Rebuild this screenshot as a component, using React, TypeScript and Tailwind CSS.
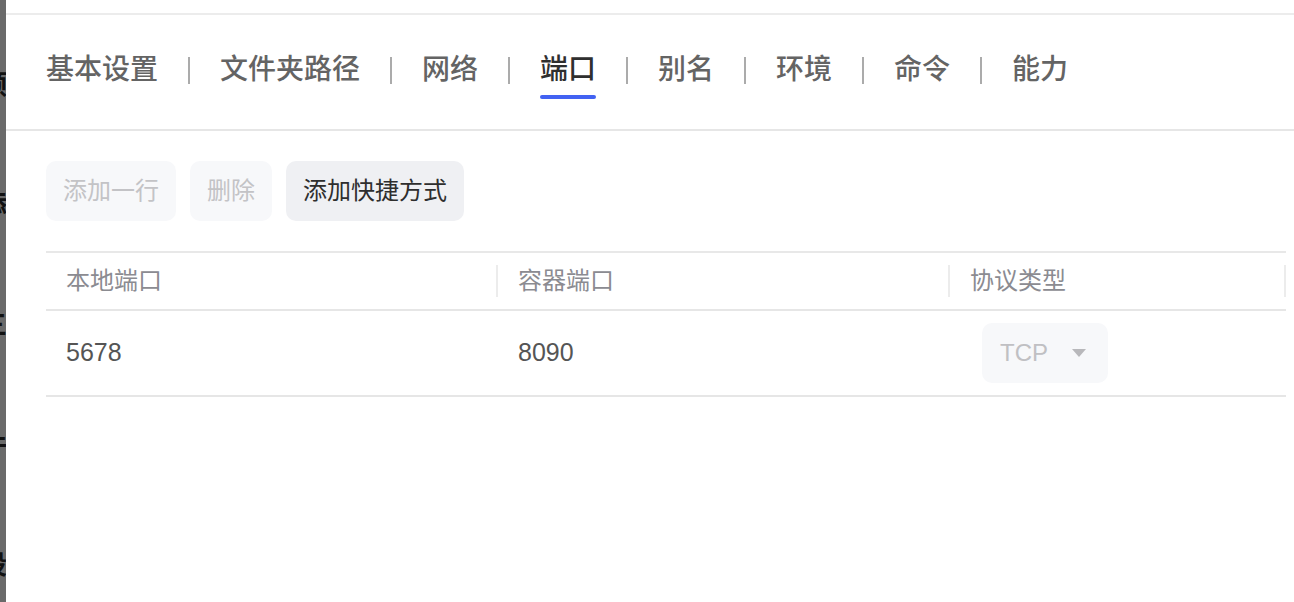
const tabs = ["基本设置", "文件夹路径", "网络", "端口", "别名", "环境", "命令", "能力"];
const activeTab = "端口";

const behind = ["预", "添", "三", "件", "设"];

const columns = [
  { title: "本地端口", width: "w-[452px]" },
  { title: "容器端口", width: "w-[452px]" },
  { title: "协议类型", width: "flex-1" },
];

const font = "font-['Liberation_Sans','Noto_Sans_CJK_SC',sans-serif]";

const App = () => {
  return (
    <div className={`flex h-[602px] w-[1294px] overflow-hidden bg-white ${font}`}>
      {/* page behind the drawer, dimmed */}
      <div className="w-[6px] shrink-0 overflow-hidden bg-[#6a6a6a]">
        <div className="ml-[-19px] flex w-[26px] flex-col pt-[25px] text-[26px] leading-[120px] font-bold text-[#111111]">
          {behind.map((c) => (
            <span key={c}>{c}</span>
          ))}
        </div>
      </div>

      <div className="flex flex-1 flex-col">
        <div className="h-[13px]" />
        <div className="h-[2px] bg-[#ececec]" />

        {/* tabs */}
        <div className="flex h-[116px] items-start border-b-2 border-[#e6e6e6] pl-[40px] pt-[36px]">
          {tabs.map((tab, i) => {
            const active = tab === activeTab;
            return (
              <div key={tab} className="flex items-start">
                {i > 0 && (
                  <div className="mx-[30px] flex h-[38px] items-center">
                    <div className="h-[27px] w-[2px] bg-[#ababab]" />
                  </div>
                )}
                <div className="flex flex-col items-center">
                  <span
                    className={`text-[28px] leading-[38px] font-medium ${
                      active ? "text-[#2f2f2f]" : "text-[#646464]"
                    }`}
                  >
                    {tab}
                  </span>
                  <div
                    className={`mt-[6px] h-[4px] w-full rounded-full ${
                      active ? "bg-[#4262f2]" : "bg-transparent"
                    }`}
                  />
                </div>
              </div>
            );
          })}
        </div>

        <div className="pl-[40px] pr-[8px] pt-[30px]">
          {/* toolbar */}
          <div className="flex gap-[14px]">
            <button className="h-[60px] rounded-[10px] bg-[#f7f8fa] px-[17px] text-[24px] text-[#c3c3c6]">
              添加一行
            </button>
            <button className="h-[60px] rounded-[10px] bg-[#f7f8fa] px-[17px] text-[24px] text-[#c3c3c6]">
              删除
            </button>
            <button className="h-[60px] rounded-[10px] bg-[#eff0f3] px-[17px] text-[24px] text-[#2e2e2e]">
              添加快捷方式
            </button>
          </div>

          {/* port table */}
          <div className="mt-[30px] border-t-2 border-[#e8e8e8]">
            <div className="flex h-[58px] border-b-2 border-[#e6e6e6]">
              {columns.map((col) => (
                <div key={col.title} className={`flex items-center justify-between ${col.width}`}>
                  <span className="pl-[20px] text-[24px] text-[#8b8b91]">{col.title}</span>
                  <div className="h-[32px] w-[2px] bg-[#ececec]" />
                </div>
              ))}
            </div>
            <div className="flex h-[86px] border-b-2 border-[#e6e6e6]">
              <div className="flex w-[452px] items-center pl-[20px] text-[25px] text-[#555555]">5678</div>
              <div className="flex w-[452px] items-center pl-[20px] text-[25px] text-[#555555]">8090</div>
              <div className="flex flex-1 items-center pl-[32px]">
                <div className="flex h-[60px] w-[126px] items-center justify-between rounded-[10px] bg-[#f7f8fa] pl-[18px] pr-[22px]">
                  <span className="text-[24px] text-[#c0c0c3]">TCP</span>
                  <svg width="14" height="8" viewBox="0 0 14 8">
                    <path d="M0 0 L14 0 L7 8 Z" fill="#b8b8bb" />
                  </svg>
                </div>
              </div>
            </div>
          </div>
        </div>
      </div>
    </div>
  );
};

export default App;
